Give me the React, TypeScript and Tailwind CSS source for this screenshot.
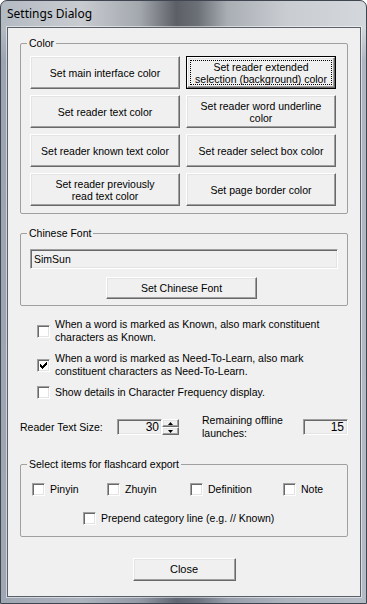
import * as React from "react";

const raised =
  "border border-t-white border-l-white border-r-[#696969] border-b-[#696969] shadow-[inset_-1px_-1px_0_#a0a0a0,inset_1px_1px_0_#e3e3e3]";
const sunken =
  "border border-t-[#a0a0a0] border-l-[#a0a0a0] border-r-white border-b-white shadow-[inset_1px_1px_0_#696969,inset_-1px_-1px_0_#e3e3e3]";

const Btn = ({
  children,
  className = "",
  focused = false,
}: {
  children: React.ReactNode;
  className?: string;
  focused?: boolean;
}) => {
  if (focused) {
    return (
      <div className={`border border-black bg-[#f0f0f0] ${className}`}>
        <div className={`h-full ${raised} p-[2px]`}>
          <div className="h-full border border-dotted border-black flex items-center justify-center text-center">
            {children}
          </div>
        </div>
      </div>
    );
  }
  return (
    <div
      className={`flex items-center justify-center text-center bg-[#f0f0f0] ${raised} ${className}`}
    >
      {children}
    </div>
  );
};

const Check = ({ checked = false }: { checked?: boolean }) => (
  <div className={`w-[13px] h-[13px] shrink-0 bg-white flex items-center justify-center ${sunken}`}>
    {checked && (
      <svg width="7" height="7" viewBox="0 0 7 7" shapeRendering="crispEdges">
        <path
          d="M6 0h1v3h-1v1h-1v1h-1v1h-1v1h-1v-1h-1v-1h-1v-3h1v1h1v1h1v-1h1v-1h1v-1h1z"
          fill="#000"
        />
      </svg>
    )}
  </div>
);

const Group = ({
  title,
  className = "",
  children,
}: {
  title: string;
  className?: string;
  children: React.ReactNode;
}) => (
  <fieldset className={`border border-[#a0a0a0] rounded-[2px] ${className}`}>
    <legend className="ml-[6px] px-[2px] leading-[12px]">{title}</legend>
    {children}
  </fieldset>
);

const Spin = () => (
  <div className="flex flex-col w-[17px] h-[16px]">
    <div className={`flex-1 flex items-center justify-center bg-[#f0f0f0] ${raised}`}>
      <svg width="5" height="3" viewBox="0 0 5 3">
        <path d="M2.5 0L5 3H0z" fill="#000" />
      </svg>
    </div>
    <div className={`flex-1 flex items-center justify-center bg-[#f0f0f0] ${raised}`}>
      <svg width="5" height="3" viewBox="0 0 5 3">
        <path d="M0 0h5L2.5 3z" fill="#000" />
      </svg>
    </div>
  </div>
);

const colorButtons = [
  { lines: ["Set main interface color"] },
  { lines: ["Set reader extended", "selection (background) color"], focused: true },
  { lines: ["Set reader text color"] },
  { lines: ["Set reader word underline", "color"] },
  { lines: ["Set reader known text color"] },
  { lines: ["Set reader select box color"] },
  { lines: ["Set reader previously", "read text color"] },
  { lines: ["Set page border color"] },
];

const App = () => {
  return (
    <div className="w-[367px] h-[604px] overflow-hidden bg-white">
      <div className="w-[367px] h-[604px] flex flex-col rounded-t-[7px] border border-[#3f464f] bg-[linear-gradient(180deg,rgba(255,255,255,0)_0px,rgba(255,255,255,0)_27px,rgba(110,122,145,0.35)_60px,rgba(110,122,145,0.3)_100%),linear-gradient(90deg,#b4bac2_0%,#c8ccd1_22%,#a3a8ae_38%,#5c6066_48%,#6c7077_54%,#a9aeb4_62%,#c9cdd2_78%,#d4d7db_100%)]">
        <div className="h-[26px] shrink-0 flex items-center pl-[6px] pb-[1px] text-[12px] text-black font-['Noto_Sans','Open_Sans',sans-serif]">
          Settings Dialog
        </div>
        <div className="flex-1 mx-[6px] mb-[6px] mr-[5px] border border-[#5a616b] shadow-[0_0_0_1px_rgba(255,255,255,0.5)] bg-[#f0f0f0] text-[10.5px] leading-[13px] text-black font-['Liberation_Sans',Arial,sans-serif] px-[12px] pt-[9px] flex flex-col">
          <Group title="Color">
            <div className="grid grid-cols-[150px_150px] gap-x-[6px] gap-y-[6px] pl-[9px] pt-[7px] pb-[7px]">
              {colorButtons.map((b) => (
                <Btn key={b.lines.join(" ")} focused={b.focused} className="h-[33px] leading-[12px] whitespace-nowrap">
                  <div>
                    {b.lines.map((l) => (
                      <div key={l}>{l}</div>
                    ))}
                  </div>
                </Btn>
              ))}
            </div>
          </Group>

          <Group title="Chinese Font" className="mt-[13px]">
            <div className="px-[9px] pt-[10px] pb-[6px] flex flex-col">
              <div className={`h-[20px] flex items-center px-[3px] bg-[#f0f0f0] ${sunken}`}>SimSun</div>
              <Btn className="mt-[8px] ml-[76px] w-[151px] h-[22px]">Set Chinese Font</Btn>
            </div>
          </Group>

          <div className="mt-[12px] ml-[17px] flex flex-col gap-[8px]">
            <div className="flex items-center gap-[5px]">
              <Check />
              <div>
                When a word is marked as Known, also mark constituent
                <br />
                characters as Known.
              </div>
            </div>
            <div className="flex items-center gap-[5px]">
              <Check checked />
              <div>
                When a word is marked as Need-To-Learn, also mark
                <br />
                constituent characters as Need-To-Learn.
              </div>
            </div>
            <div className="flex items-center gap-[5px]">
              <Check />
              <div>Show details in Character Frequency display.</div>
            </div>
          </div>

          <div className="mt-[15px] flex items-center">
            <div className="w-[97px]">Reader Text Size:</div>
            <div className={`w-[45px] h-[16px] flex items-center justify-end pr-[2px] bg-[#f0f0f0] text-[12px] ${sunken}`}>
              30
            </div>
            <Spin />
            <div className="ml-[23px] w-[101px]">
              Remaining offline
              <br />
              launches:
            </div>
            <div className={`w-[45px] h-[16px] flex items-center justify-end pr-[3px] bg-[#f0f0f0] text-[12px] ${sunken}`}>
              15
            </div>
          </div>

          <Group title="Select items for flashcard export" className="mt-[18px]">
            <div className="pt-[13px] pb-[11px] flex flex-col gap-[16px]">
              <div className="flex items-center pl-[11px]">
                <div className="w-[75px] flex items-center gap-[5px]">
                  <Check />
                  <span>Pinyin</span>
                </div>
                <div className="w-[83px] flex items-center gap-[5px]">
                  <Check />
                  <span>Zhuyin</span>
                </div>
                <div className="w-[93px] flex items-center gap-[5px]">
                  <Check />
                  <span>Definition</span>
                </div>
                <div className="flex items-center gap-[5px]">
                  <Check />
                  <span>Note</span>
                </div>
              </div>
              <div className="flex items-center gap-[5px] pl-[62px]">
                <Check />
                <span>Prepend category line (e.g. // Known)</span>
              </div>
            </div>
          </Group>

          <Btn className="mt-[21px] mx-auto w-[103px] h-[23px] text-[11px]">Close</Btn>
        </div>
      </div>
    </div>
  );
};

export default App;
